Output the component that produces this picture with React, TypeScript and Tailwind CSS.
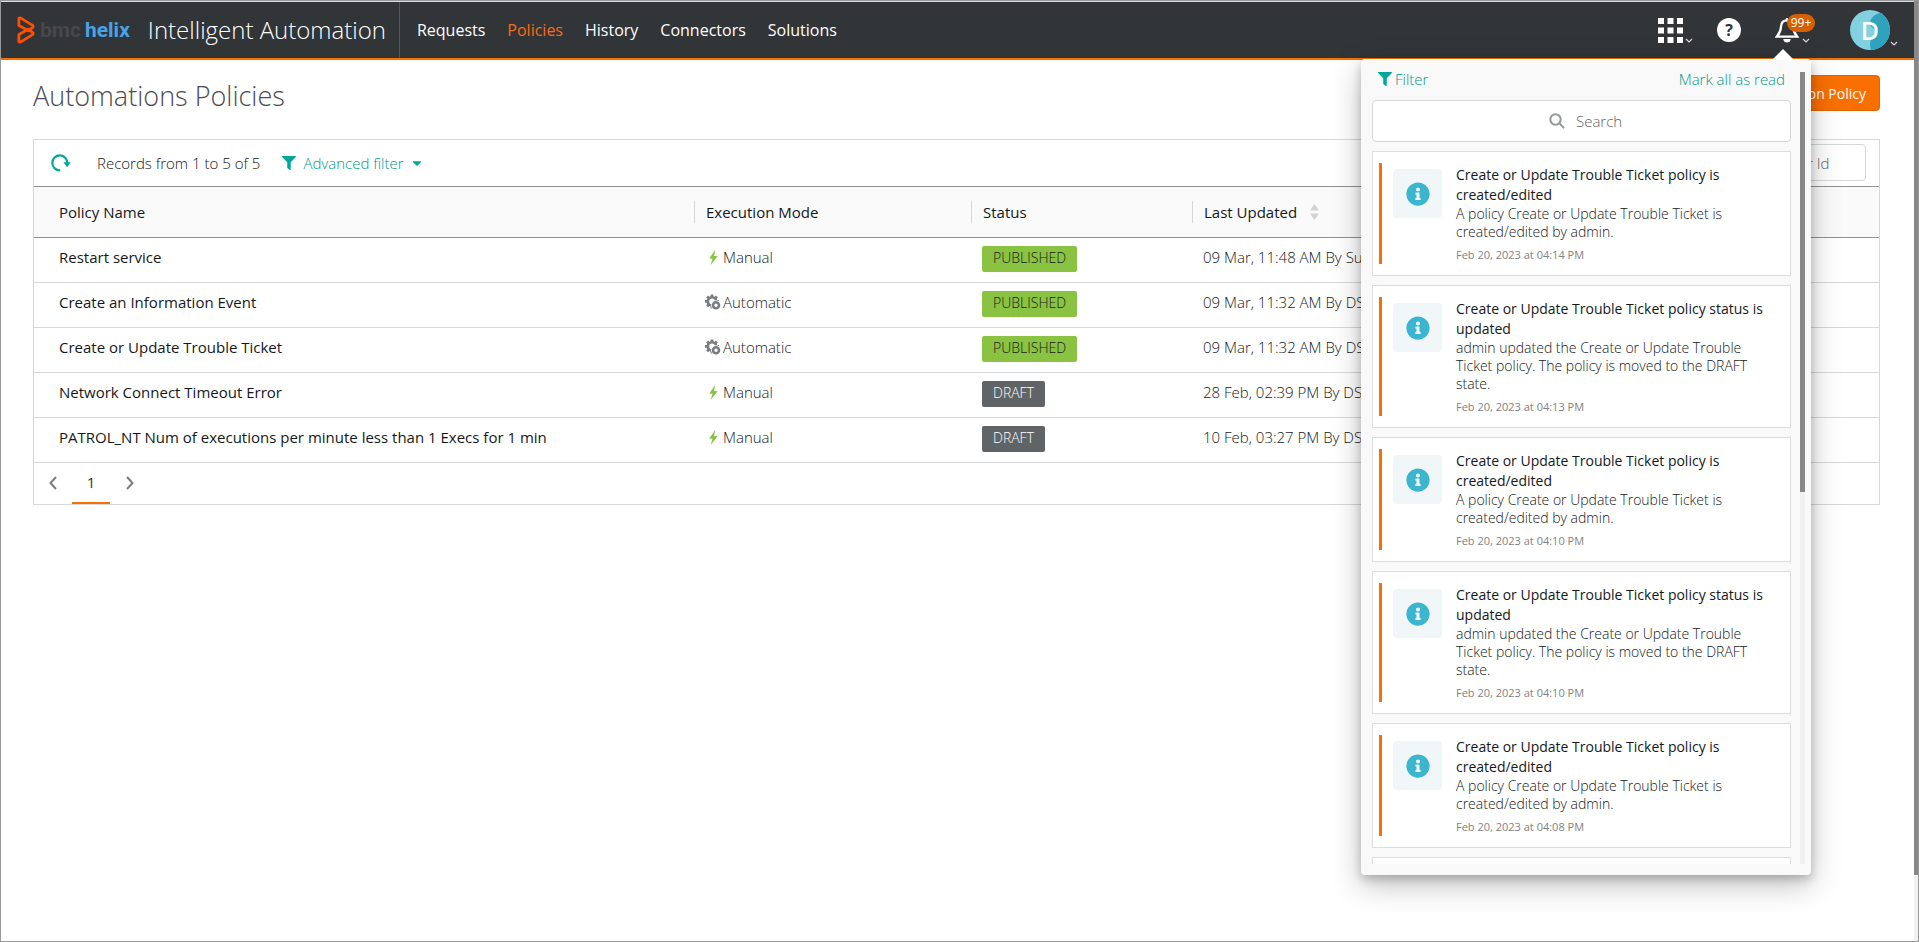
import React from "react";
import { FaFilter, FaInfoCircle, FaCaretDown } from "react-icons/fa";

type Policy = {
  name: string;
  mode: "Manual" | "Automatic";
  status: "PUBLISHED" | "DRAFT";
  updated: string;
};

const policies: Policy[] = [
  { name: "Restart service", mode: "Manual", status: "PUBLISHED", updated: "09 Mar, 11:48 AM By Sunil" },
  { name: "Create an Information Event", mode: "Automatic", status: "PUBLISHED", updated: "09 Mar, 11:32 AM By DSOM" },
  { name: "Create or Update Trouble Ticket", mode: "Automatic", status: "PUBLISHED", updated: "09 Mar, 11:32 AM By DSOM" },
  { name: "Network Connect Timeout Error", mode: "Manual", status: "DRAFT", updated: "28 Feb, 02:39 PM By DSOM" },
  {
    name: "PATROL_NT Num of executions per minute less than 1 Execs for 1 min",
    mode: "Manual",
    status: "DRAFT",
    updated: "10 Feb, 03:27 PM By DSOM",
  },
];

const created = {
  title: "Create or Update Trouble Ticket policy is created/edited",
  body: "A policy Create or Update Trouble Ticket is created/edited by admin.",
};
const moved = {
  title: "Create or Update Trouble Ticket policy status is updated",
  body: "admin updated the Create or Update Trouble Ticket policy. The policy is moved to the DRAFT state.",
};

const notifications = [
  { ...created, time: "Feb 20, 2023 at 04:14 PM" },
  { ...moved, time: "Feb 20, 2023 at 04:13 PM" },
  { ...created, time: "Feb 20, 2023 at 04:10 PM" },
  { ...moved, time: "Feb 20, 2023 at 04:10 PM" },
  { ...created, time: "Feb 20, 2023 at 04:08 PM" },
];

const navItems = ["Requests", "Policies", "History", "Connectors", "Solutions"];

function Chevron() {
  return (
    <svg width="8" height="5" viewBox="0 0 8 5" fill="none" stroke="#d6d7d8" strokeWidth="1.2" aria-hidden="true">
      <path d="M1 1l3 3 3-3" />
    </svg>
  );
}

function Logo() {
  return (
    <div className="flex items-center gap-[5px]">
      <svg width="18" height="28" viewBox="0 0 18 28" fill="none" stroke="#fe5000" strokeWidth="2.8" strokeLinejoin="round" aria-hidden="true">
        <path d="M1.9 2.2v7.4L11.4 14.8 16 11.2V9.6L3.4 1.9z" />
        <path d="M1.9 25.8v-7.4L11.4 13.2 16 16.8V18.4L3.4 26.1z" />
      </svg>
      <div className="flex gap-1 font-['Roboto',sans-serif] text-[21px] leading-[28px] font-bold">
        <span className="text-[#47484b]">bmc</span>
        <span className="text-[#47a3e6]">helix</span>
      </div>
    </div>
  );
}

function BoltIcon() {
  return (
    <svg width="9" height="15" viewBox="0 0 9 15" fill="#89c341" aria-hidden="true">
      <path d="M6.200 0L.2 8.500l3.300.2L1.700 15 8.600 6.200l-3.500-.3z" />
    </svg>
  );
}

function GearIcon() {
  return (
    <svg width="16" height="16" viewBox="0 0 16 16" aria-hidden="true">
      <circle cx="7" cy="7.4" r="4.1" fill="none" stroke="#7a7d80" strokeWidth="2.6" />
      <path
        d="M7 .4v3M7 11.5v3M0 7.4h3M11 7.4h3M2.1 2.5l2 2M11.9 2.5l-2 2M2.1 12.3l2-2"
        stroke="#7a7d80"
        strokeWidth="2.8"
      />
      <circle cx="11" cy="11.2" r="5" fill="#fff" />
      <circle cx="11" cy="11.2" r="3" fill="none" stroke="#7a7d80" strokeWidth="2.600" />
    </svg>
  );
}

function Header() {
  return (
    <header className="flex h-[58px] items-center border-b-2 border-[#fa7000] bg-[#313538] text-white">
      <div className="flex h-full items-center border-r border-[#54585b] pr-[13px] pl-4">
        <Logo />
        <span className="ml-[18px] text-[24px] leading-[30px] font-light">Intelligent Automation</span>
      </div>
      <nav className="ml-[17px] flex gap-[22px] text-[16px] leading-[24px]">
        {navItems.map((item) => (
          <a key={item} href="#" className={item === "Policies" ? "text-[#fa6a14]" : "text-white"}>
            {item}
          </a>
        ))}
      </nav>
      <div className="ml-auto flex items-center pr-4">
        <button type="button" aria-label="Applications" className="flex items-end gap-[2px]">
          <svg width="25" height="25" viewBox="0 0 25 25" fill="#fff" aria-hidden="true">
            {[0, 9.5, 19].map((y) => [0, 9.5, 19].map((x) => <rect key={`${x}-${y}`} x={x} y={y} width="6" height="6" />))}
          </svg>
          <Chevron />
        </button>
        <button
          type="button"
          aria-label="Help"
          className="ml-6 flex size-6 items-center justify-center rounded-full bg-white text-[16px] leading-none font-bold text-[#313538]"
        >
          ?
        </button>
        <button type="button" aria-label="Notifications" className="relative ml-[34px] flex items-end gap-[3px]">
          <svg width="24" height="25" viewBox="0 0 24 25" fill="none" stroke="#fff" strokeWidth="2.300" aria-hidden="true">
            <path d="M12 2.400C8 2.400 6.200 5.500 6 8.600C5.700 13 4.500 15.500 1.900 18.600H22.100C19.500 15.500 18.300 13 18 8.600C17.800 5.500 16 2.400 12 2.400Z" />
            <path d="M12 0v2.400" />
            <path d="M8.300 21h7.400c0 4.800-7.400 4.800-7.400 0z" fill="#fff" stroke="none" />
          </svg>
          <Chevron />
          <span className="absolute -top-1 left-3 flex h-[18px] w-7 items-center justify-center rounded-full bg-[#d75f00] text-[12px] leading-none font-medium">
            99+
          </span>
        </button>
        <button type="button" aria-label="Account" className="ml-10 flex items-end">
          <span className="relative flex size-10 items-center justify-center overflow-hidden rounded-full bg-[#82d0e0]">
            <svg className="absolute inset-0" width="40" height="40" viewBox="0 0 40 40" fill="#2fa3bd" aria-hidden="true">
              <path d="M30 3C23 5 20 9 20 14C21 18 26 18 25 23C20 29 19 33 21 40H40V3z" />
            </svg>
            <span className="relative text-[25px] leading-none font-semibold">D</span>
          </span>
          <span className="pb-1">
            <Chevron />
          </span>
        </button>
      </div>
    </header>
  );
}

function PolicyTable() {
  const head = "border-b border-[#8f9192] p-0 text-left font-medium";
  return (
    <table className="w-full table-fixed border-collapse text-[15px] leading-[20px] font-light text-[#15181a]">
      <colgroup>
        <col className="w-[660px]" />
        <col className="w-[277px]" />
        <col className="w-[221px]" />
        <col />
      </colgroup>
      <thead>
        <tr className="h-[50px] bg-[#fafafa]">
          <th className={head}>
            <div className="pl-[25px]">Policy Name</div>
          </th>
          <th className={head}>
            <div className="border-l border-[#d6d7d8] py-px pl-[11px]">Execution Mode</div>
          </th>
          <th className={head}>
            <div className="border-l border-[#d6d7d8] py-px pl-[11px]">Status</div>
          </th>
          <th className={head}>
            <div className="flex items-center gap-[13px] border-l border-[#d6d7d8] py-px pl-[11px]">
              Last Updated
              <svg width="9" height="16" viewBox="0 0 9 16" fill="#d0d2d3" aria-hidden="true">
                <path d="M4.500 0l4.500 6.500H0zM4.500 16L0 9.500h9z" />
              </svg>
            </div>
          </th>
        </tr>
      </thead>
      <tbody>
        {policies.map((p) => (
          <tr key={p.name} className="h-[45px] border-b border-[#d6d7d8]">
            <td className="p-0 pb-[5px] pl-[25px] font-medium">{p.name}</td>
            <td className="p-0 pb-[5px] pl-[11px]">
              <div className="flex items-center gap-[2px]">
                <span className="flex w-4 justify-center">{p.mode === "Manual" ? <BoltIcon /> : <GearIcon />}</span>
                {p.mode}
              </div>
            </td>
            <td className="p-0 pb-[2px] pl-[11px]">
              <span
                className={
                  p.status === "PUBLISHED"
                    ? "inline-block rounded-[2px] bg-[#89c341] px-[11px] pt-[2px] pb-1 text-[14px]"
                    : "inline-block rounded-[2px] bg-[#616467] px-[11px] pt-[2px] pb-1 text-[14px] text-white"
                }
              >
                {p.status}
              </span>
            </td>
            <td className="truncate p-0 pb-[5px] pl-[11px]">{p.updated}</td>
          </tr>
        ))}
      </tbody>
    </table>
  );
}

function PagerArrow({ d }: { d: string }) {
  return (
    <svg width="8" height="14" viewBox="0 0 8 14" fill="none" stroke="#7a7d80" strokeWidth="2" aria-hidden="true">
      <path d={d} />
    </svg>
  );
}

function NotificationPanel() {
  return (
    <aside
      aria-label="Notifications"
      className="absolute -top-px right-[103px] flex h-[816px] w-[450px] rounded-[4px] bg-[#f9f9f9] pt-[10px] pr-[6px] pb-[11px] pl-[11px] shadow-[0_10px_30px_rgba(0,0,0,0.25),0_4px_10px_rgba(0,0,0,0.2)]"
    >
      <svg className="absolute -top-[10px] right-[17px]" width="22" height="11" viewBox="0 0 22 11" fill="#fff" aria-hidden="true">
        <path d="M11 0l11 11H0z" />
      </svg>
      <div className="min-w-0 flex-1 overflow-hidden pr-[9px]">
        <div className="flex justify-between px-[6px] text-[15px] leading-[20px] font-light text-[#009a91]">
          <button type="button" className="flex items-center gap-[3px]">
            <FaFilter size={14} color="#00a79d" />
            Filter
          </button>
          <button type="button">Mark all as read</button>
        </div>
        <label className="mt-[11px] flex h-[42px] items-center justify-center gap-[11px] rounded-[4px] border border-[#d6d7d8] bg-white pl-3">
          <svg width="16" height="16" viewBox="0 0 16 16" fill="none" stroke="#959899" strokeWidth="2" aria-hidden="true">
            <circle cx="6.500" cy="6.500" r="5.200" />
            <path d="M10.300 10.300l4.800 4.800" />
          </svg>
          <input
            type="text"
            aria-label="Search notifications"
            placeholder="Search"
            className="w-[50px] bg-transparent text-[15px] leading-[20px] font-light outline-none placeholder:text-[#5f6264]"
          />
        </label>
        <ul className="mt-[9px] flex flex-col gap-[9px]">
          {notifications.map((n) => (
            <li key={n.title + n.time} className="flex border border-[#dcdddd] bg-white py-[11px] pr-3 pl-[6px]">
              <span className="w-[3px] shrink-0 bg-[#fa7000]" />
              <span className="mt-[6px] ml-[11px] flex size-[49px] shrink-0 items-center justify-center rounded-[4px] bg-[#f1f7f8]">
                <FaInfoCircle size={24} color="#3bb5d0" />
              </span>
              <div className="ml-[14px] min-w-0 pt-[2px]">
                <h3 className="text-[14px] leading-[20px] font-medium text-[#15181a]">{n.title}</h3>
                <p className="text-[14px] leading-[18px] font-light text-[#15181a]">{n.body}</p>
                <p className="mt-[5px] text-[11px] leading-[18px] text-[#7f8284]">{n.time}</p>
              </div>
            </li>
          ))}
          <li className="h-[120px] border border-[#dcdddd] bg-white" />
        </ul>
      </div>
      <div className="mt-[3px] flex w-[5px] flex-col bg-[#f1f1f1]">
        <div className="h-[53%] bg-[#888]" />
      </div>
    </aside>
  );
}

export default function App() {
  return (
    <div className="flex min-h-screen border border-[#999] bg-white font-['Open_Sans',sans-serif] text-[#313538]">
      <div className="flex min-w-0 flex-1 flex-col border-t border-[#ddd]">
        <Header />
        <main className="relative flex-1 pt-[15px] pr-[34px] pl-8">
          <div className="flex items-start justify-between">
            <h1 className="text-[27px] leading-[42px] font-light text-[#4a4d50]">Automations Policies</h1>
            <button type="button" className="h-9 rounded-[4px] border border-[#e06400] bg-[#fa7000] px-[13px] text-[14px] text-white">
              Create Automation Policy
            </button>
          </div>
          <section className="mt-[22px] border border-[#d6d7d8]">
            <div className="flex h-[47px] items-center border-b border-[#8f9192] pr-[13px] pb-px pl-[17px] text-[15px] leading-[20px] font-light text-[#15181a]">
              <button type="button" aria-label="Refresh">
                <svg width="20" height="18" viewBox="0 0 20 18" fill="none" stroke="#00a79d" strokeWidth="2.200" aria-hidden="true">
                  <path d="M9.200 16.400A7.500 7.500 0 1 1 16.300 9.500" />
                  <path d="M12.400 8.200h7.400l-3.700 5z" fill="#00a79d" stroke="none" />
                </svg>
              </button>
              <span className="ml-[26px]">Records from 1 to 5 of 5</span>
              <button type="button" className="ml-[22px] flex items-center text-[#009a91]">
                <FaFilter size={14} color="#00a79d" />
                <span className="ml-[7px]">Advanced filter</span>
                <FaCaretDown size={14} color="#00a79d" className="ml-[6px]" />
              </button>
              <input
                type="text"
                aria-label="Search policies"
                placeholder="Search by Policy Name or Id"
                className="ml-auto h-[37px] w-[237px] rounded-[4px] border border-[#d6d7d8] px-3 text-[15px] placeholder:text-[#5f6264]"
              />
            </div>
            <PolicyTable />
            <div className="flex h-[41px] items-center pl-[15px]">
              <button type="button" aria-label="Previous page">
                <PagerArrow d="M7 1L1.500 7 7 13" />
              </button>
              <button type="button" className="ml-[15px] h-full w-[38px] border-b-2 border-[#fa7000] text-[15px]">
                1
              </button>
              <button type="button" aria-label="Next page" className="ml-4">
                <PagerArrow d="M1 1l5.500 6L1 13" />
              </button>
            </div>
          </section>
          <NotificationPanel />
        </main>
      </div>
      <div className="flex w-1 flex-col bg-[#f1f1f1]" aria-hidden="true">
        <div className="flex-[93] bg-[#888]" />
        <div className="flex-[7]" />
      </div>
    </div>
  );
}
